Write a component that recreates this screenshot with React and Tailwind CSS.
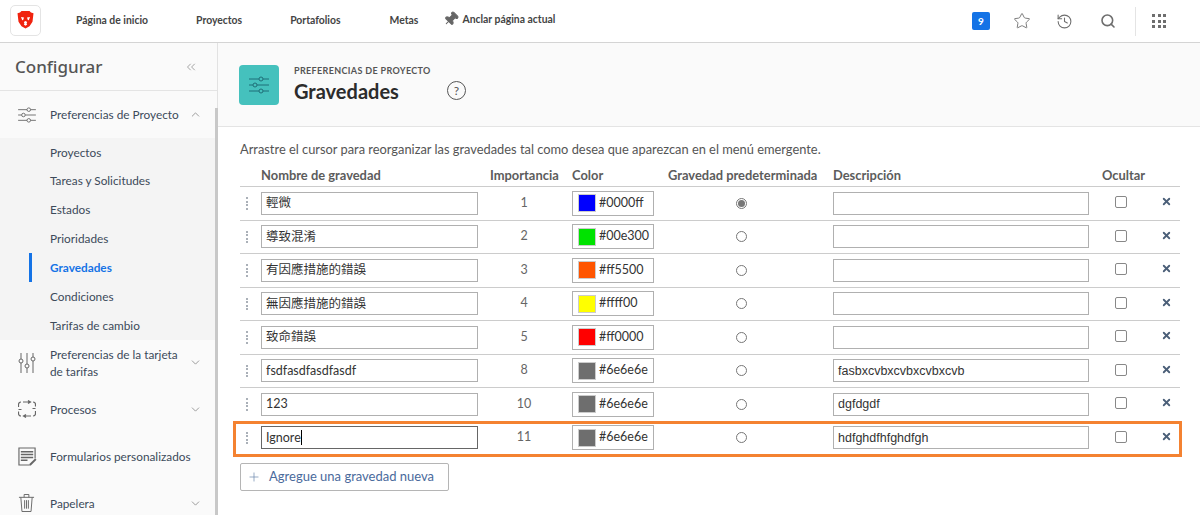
import { ChevronUp, ChevronDown, ChevronsLeft, Star, History, Search, Pin, Plus, X } from "lucide-react";

const filas = [
  { nombre: "輕微", imp: "1", color: "#0000ff", desc: "", marcado: true },
  { nombre: "導致混淆", imp: "2", color: "#00e300", desc: "" },
  { nombre: "有因應措施的錯誤", imp: "3", color: "#ff5500", desc: "" },
  { nombre: "無因應措施的錯誤", imp: "4", color: "#ffff00", desc: "" },
  { nombre: "致命錯誤", imp: "5", color: "#ff0000", desc: "" },
  { nombre: "fsdfasdfasdfasdf", imp: "8", color: "#6e6e6e", desc: "fasbxcvbxcvbxcvbxcvb" },
  { nombre: "123", imp: "10", color: "#6e6e6e", desc: "dgfdgdf" },
  { nombre: "Ignore", imp: "11", color: "#6e6e6e", desc: "hdfghdfhfghdfgh", activa: true },
];

const subMenu = ["Proyectos", "Tareas y Solicitudes", "Estados", "Prioridades", "Gravedades", "Condiciones", "Tarifas de cambio"];

const Sliders = ({ className }) => (
  <svg className={className} viewBox="0 0 20 18" fill="none" stroke="currentColor" strokeWidth="1">
    <path d="M0 3h10M14 3h6M0 9h4M8 9h12M0 15h10M14 15h6" />
    <circle cx="12" cy="3" r="2" />
    <circle cx="6" cy="9" r="2" />
    <circle cx="12" cy="15" r="2" />
  </svg>
);

const SlidersV = ({ className }) => (
  <svg className={className} viewBox="0 0 18 20" fill="none" stroke="currentColor" strokeWidth="1">
    <path d="M3 0v6M3 10v10M9 0v11M9 15v5M15 0v4M15 8v12" />
    <circle cx="3" cy="8" r="2" />
    <circle cx="9" cy="13" r="2" />
    <circle cx="15" cy="6" r="2" />
  </svg>
);

const Procesos = ({ className }) => (
  <svg className={className} viewBox="0 0 18 18" fill="none" stroke="currentColor" strokeWidth="1.200">
    <path d="M5 2h7M10 0.500l2.500 1.500-2.500 1.500" />
    <path d="M13 16H6M8 14.500l-2.500 1.500 2.500 1.500" />
    <path d="M15 2a2.500 2.500 0 0 1 2.500 2.500v2M14.500 8.500h3" />
    <path d="M17.500 11v2.500A2.500 2.500 0 0 1 15 16" />
    <path d="M3 16a2.500 2.500 0 0 1-2.500-2.500v-2M0.500 7V4.500A2.500 2.500 0 0 1 3 2M0.500 9.500h3" />
  </svg>
);

const Formulario = ({ className }) => (
  <svg className={className} viewBox="0 0 20 20" fill="none" stroke="currentColor" strokeWidth="1.200">
    <path d="M12 19H1V1h17v11" />
    <path d="M3 5h13M3 8h13M3 11h13M3 14h7" strokeWidth="1.600" />
    <path d="M12 18l6-6 1.500 1.500-6 6H12z" fill="currentColor" stroke="none" />
  </svg>
);

const Papelera = ({ className }) => (
  <svg className={className} viewBox="0 0 18 20" fill="none" stroke="currentColor" strokeWidth="1">
    <path d="M1 4h16M6.500 4V1h5v3M3 4l1.200 15h9.600L15 4M7 7v9M9 7v9M11 7v9" />
  </svg>
);

const Logo = () => (
  <svg className="w-[17px] h-[18px]" viewBox="0 0 17 18">
    <path d="M4.500 0h8l1.500 1.600 2.500 0.600-1 8.500-3 4.500-4 2.300-4-2.300-3-4.500-1-8.500L3 1.600z" fill="#f0230f" />
    <path d="M4 6l3 .6-.8 2.400-1 .3zM13 6l-3 .6.8 2.400 1 .3z" fill="#fff" />
    <path d="M6.800 11l1.700-1 1.700 1-.7 1.600.7.800-1.700 1.300-1.700-1.300.7-.8z" fill="#fff" />
  </svg>
);

const Campo = ({ valor, activa, clase = "" }) => (
  <div className={`flex items-center h-[23px] border bg-white pl-[4px] leading-none text-[#333] overflow-hidden whitespace-nowrap ${activa ? "border-[#666]" : "border-[#b0b0b0]"} ${clase}`}>
    {valor}
    {activa && <span className="inline-block w-px h-[15px] bg-black" />}
  </div>
);

const Fila = ({ fila }) => (
  <div className="relative grid grid-cols-[21px_229px_68px_14px_96px_151px_14px_269px_43px_35px] items-center h-[33.5px] border-b border-[#ccc]">
    <div className="flex flex-col items-center gap-[1.500px] pr-[7px]">
      <span className="w-[2px] h-[2px] bg-[#aab0b8]" />
      <span className="w-[2px] h-[2px] bg-[#aab0b8]" />
      <span className="w-[2px] h-[2px] bg-[#aab0b8]" />
      <span className="w-[2px] h-[2px] bg-[#aab0b8]" />
    </div>
    <Campo valor={fila.nombre} activa={fila.activa} clase="w-[217px] text-[12.500px]" />
    <div className="text-center text-[12.500px] text-[#666]">{fila.imp}</div>
    <div />
    <div className="flex items-center gap-[3px] w-[82px] h-[25px] border border-[#b0b0b0] bg-white pl-[5px] text-[12.500px] text-[#333] whitespace-nowrap overflow-hidden">
      <span className="w-[18px] h-[18px] shrink-0 border border-[#ccc]" style={{ backgroundColor: fila.color }} />
      {fila.color}
    </div>
    <div className="flex justify-center pr-[5px]">
      <span className="flex items-center justify-center w-[11px] h-[11px] rounded-full border border-[#777] bg-white">
        {fila.marcado && <span className="w-[7px] h-[7px] rounded-full bg-[#777]" />}
      </span>
    </div>
    <div />
    <Campo valor={fila.desc} clase="w-[256px] font-['Liberation_Sans',sans-serif] text-[12.500px]" />
    <div className="flex justify-center pr-[5px] -mt-[2px]">
      <span className="w-[12px] h-[12px] rounded-[2px] border border-[#888] bg-white" />
    </div>
    <div className="flex justify-center -mt-[3px] pl-[7px]">
      <X className="w-[11px] h-[11px] text-[#4b5f78]" strokeWidth={4} />
    </div>
    {fila.activa && <div className="absolute -left-[7px] -right-[2px] -top-px -bottom-[3px] border-[3px] border-[#f48231] pointer-events-none" />}
  </div>
);

const ItemMenu = ({ icono, chevron = true, alto = "h-[47px]", children }) => (
  <div className={`flex items-center ${alto} pl-[18px] pr-[15px] text-[11.800px] leading-[17px] text-[#3c4a5a]`}>
    <span className="w-[32px] shrink-0 text-[#666]">{icono}</span>
    <span className="flex-1">{children}</span>
    {chevron && <ChevronDown className="w-[13px] h-[13px] text-[#888]" strokeWidth={1.5} />}
  </div>
);

const App = () => {
  return (
    <div className="w-[1200px] h-[515px] overflow-hidden bg-white flex flex-col font-['Lato','Noto_Sans_CJK_TC',sans-serif]">
      {/* Barra superior */}
      <header className="h-[43px] shrink-0 flex items-center border-b border-[#d4d4d4] bg-white">
        <div className="ml-[10px] -mt-[2px] w-[31px] h-[31px] rounded-[5px] border border-[#e4e4e4] flex items-center justify-center">
          <Logo />
        </div>
        <nav className="flex items-center -mt-[1px] text-[10.400px] font-bold text-[#444]">
          <span className="ml-[35px]">Página de inicio</span>
          <span className="ml-[48px]">Proyectos</span>
          <span className="ml-[48px]">Portafolios</span>
          <span className="ml-[49px]">Metas</span>
          <span className="ml-[25px] flex items-center gap-[3px] -mt-[2px]">
            <Pin className="w-[16px] h-[16px] rotate-45 text-[#666] fill-[#666]" strokeWidth={1.5} />
            Anclar página actual
          </span>
        </nav>
        <div className="ml-auto flex items-center text-[#6e6e6e]">
          <span className="w-[18px] h-[18px] rounded-[2px] bg-[#1473e6] text-white text-[10px] font-bold flex items-center justify-center">9</span>
          <Star className="ml-[23px] w-[18px] h-[18px]" strokeWidth={1.2} />
          <History className="ml-[25px] w-[17px] h-[17px]" strokeWidth={1.5} />
          <Search className="ml-[27px] w-[16px] h-[16px]" strokeWidth={2.4} />
          <div className="ml-[19px] w-px h-[29px] bg-[#e4e4e4]" />
          <div className="ml-[16px] mr-[34px] grid grid-cols-3 gap-[2.500px]">
            {[1, 2, 3, 4, 5, 6, 7, 8, 9].map((n) => (
              <span key={n} className="w-[3px] h-[3px] bg-[#6e6e6e]" />
            ))}
          </div>
        </div>
      </header>

      <div className="flex flex-1 min-h-0">
        {/* Menu lateral */}
        <aside className="w-[218px] shrink-0 relative bg-[#fafafa] border-r border-[#e2e2e2]">
          <div className="h-[48px] flex items-center justify-between pl-[15px] pr-[19px] border-b border-[#e4e4e4]">
            <span className="text-[17px] font-['Noto_Sans',sans-serif] font-medium text-[#555]">Configurar</span>
            <ChevronsLeft className="w-[14px] h-[14px] text-[#666]" strokeWidth={1} />
          </div>
          <div className="flex items-center h-[47px] pl-[18px] pr-[15px] text-[11.800px] text-[#3c4a5a]">
            <span className="w-[32px] shrink-0 text-[#666]"><Sliders className="w-[18px] h-[16px]" /></span>
            <span className="flex-1 whitespace-nowrap">Preferencias de Proyecto</span>
            <ChevronUp className="w-[13px] h-[13px] text-[#888]" strokeWidth={1.5} />
          </div>
          <div className="bg-[#f4f4f4]">
            {subMenu.map((item) => (
              <div
                key={item}
                className={`h-[28.830px] flex items-center text-[11.800px] ${item === "Gravedades" ? "ml-[29px] pl-[18px] border-l-[3px] border-[#1473e6] text-[#1473e6] font-bold" : "pl-[50px] text-[#3c4a5a]"}`}
              >
                {item}
              </div>
            ))}
          </div>
          <ItemMenu alto="h-[46px]" icono={<SlidersV className="w-[18px] h-[20px]" />}>
            <span className="block w-[130px]">Preferencias de la tarjeta de tarifas</span>
          </ItemMenu>
          <ItemMenu icono={<Procesos className="w-[18px] h-[18px]" />}>Procesos</ItemMenu>
          <ItemMenu chevron={false} icono={<Formulario className="w-[19px] h-[19px]" />}><span className="whitespace-nowrap">Formularios personalizados</span></ItemMenu>
          <ItemMenu icono={<Papelera className="w-[17px] h-[20px]" />}>Papelera</ItemMenu>
          <div className="absolute right-[-1px] top-[65px] bottom-0 w-[3px] bg-[#c8c8c8]" />
        </aside>

        <main className="flex-1 min-w-0 bg-white">
          {/* Cabecera */}
          <div className="h-[84px] flex items-center pl-[21px] bg-[#fafafa] border-b border-[#e4e4e4]">
            <div className="w-[40px] h-[40px] rounded-[4px] bg-[#45c1bd] flex items-center justify-center text-[#1f6f78]">
              <Sliders className="w-[20px] h-[18px]" />
            </div>
            <div className="ml-[15px] w-[153px]">
              <p className="text-[9px] leading-[12px] font-bold tracking-[0.35px] text-[#555] whitespace-nowrap">PREFERENCIAS DE PROYECTO</p>
              <h1 className="text-[20px] leading-[28px] font-bold text-[#2c2c2c]">Gravedades</h1>
            </div>
            <div className="mt-[12px] w-[19px] h-[19px] rounded-full border border-[#555] flex items-center justify-center text-[12px] text-[#555]">?</div>
          </div>

          {/* Tabla */}
          <div className="ml-[22px] w-[940px]">
            <p className="mt-[13px] h-[25px] text-[12.850px] text-[#555] whitespace-nowrap">Arrastre el cursor para reorganizar las gravedades tal como desea que aparezcan en el menú emergente.</p>
            <div className="grid grid-cols-[21px_229px_68px_14px_96px_151px_14px_269px_43px_35px] items-center h-[22px] border-b border-[#ccc] text-[12.900px] font-bold text-[#5c5c5c]">
              <div />
              <div>Nombre de gravedad</div>
              <div className="whitespace-nowrap">Importancia</div>
              <div />
              <div>Color</div>
              <div className="whitespace-nowrap">Gravedad predeterminada</div>
              <div />
              <div>Descripción</div>
              <div>Ocultar</div>
              <div />
            </div>
            {filas.map((fila) => (
              <Fila key={fila.imp} fila={fila} />
            ))}
            <button className="mt-[8px] flex items-center h-[28px] w-[209px] pl-[6px] border border-[#b5b5b5] rounded-[2px] bg-white text-[13px] text-[#4a6a9c]">
              <Plus className="w-[14px] h-[14px] text-[#6b87ad]" strokeWidth={1.2} />
              <span className="ml-[8px]">Agregue una gravedad nueva</span>
            </button>
          </div>
        </main>
      </div>
    </div>
  );
};

export default App;
